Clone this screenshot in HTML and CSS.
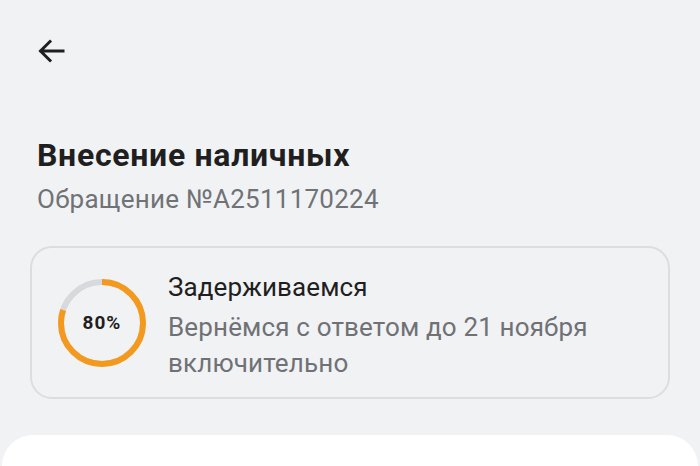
FILE: index.html
```html
<!DOCTYPE html>
<html lang="ru">
<head>
<meta charset="utf-8">
<link rel="stylesheet" href="styles.css">
</head>
<body>
<div class="page">
  <header class="topbar">
    <button class="back" aria-label="Назад">
      <svg width="32" height="32" viewBox="0 0 32 32"><path d="M28 16H6M15 6.5L5.5 16 15 25.5" fill="none" stroke="#1f1f21" stroke-width="3" stroke-linecap="square" stroke-linejoin="miter"/></svg>
    </button>
  </header>
  <section class="heading">
    <h1 class="title">Внесение наличных</h1>
    <p class="subtitle">Обращение №A2511170224</p>
  </section>
  <section class="status-card">
    <div class="progress">
      <svg width="88" height="88" viewBox="0 0 88 88">
        <circle cx="44" cy="44" r="41" fill="none" stroke="#d8d9dc" stroke-width="6"/>
        <circle cx="44" cy="44" r="41" fill="none" stroke="#f39a1e" stroke-width="6" stroke-dasharray="206.1 257.6" transform="rotate(-90 44 44)"/>
      </svg>
      <span class="progress-label">80%</span>
    </div>
    <div class="status-text">
      <div class="status-title">Задерживаемся</div>
      <div class="status-desc">Вернёмся с ответом до 21 ноября включительно</div>
    </div>
  </section>
  <section class="sheet"></section>
</div>
</body>
</html>
```
FILE: styles.css
```css
* { box-sizing: border-box; }
html, body { margin: 0; padding: 0; }
body {
  background: #f1f2f4;
  font-family: Roboto, "Noto Sans", sans-serif;
  width: 700px;
  height: 466px;
  overflow: hidden;
}
.page { display: flex; flex-direction: column; }
.topbar { height: 102px; padding: 35px 0 0 35px; }
.back {
  background: none; border: 0; padding: 0; width: 32px; height: 32px;
  display: block;
}
.back svg { display: block; }
.heading { padding: 0 0 0 37px; }
.title {
  margin: 34px 0 0 0;
  font-size: 32px; font-weight: 700; line-height: 38px;
  color: #1f1f21; letter-spacing: 0.7px;
}
.subtitle {
  margin: 9px 0 0 0;
  font-size: 26px; line-height: 32px; color: #707276;
  letter-spacing: 0.25px;
}
.status-card {
  margin: 31px 30px 0 30px;
  height: 153px;
  border: 2px solid #dcdde1;
  border-radius: 22px;
  display: flex; align-items: center;
  padding: 0 20px 0 26px;
  gap: 22px;
}
.progress { position: relative; width: 88px; height: 88px; flex: none; }
.progress svg { display: block; }
.progress-label {
  position: absolute; inset: 0;
  display: flex; align-items: center; justify-content: center;
  font-size: 19px; font-weight: 700; color: #1f1f21; letter-spacing: 1px;
}
.status-text { padding-top: 7px; }
.status-title { font-size: 26px; line-height: 32px; color: #1f1f21; letter-spacing: 0.1px; }
.status-desc { margin-top: 6px; font-size: 26px; line-height: 36px; color: #6f7175; letter-spacing: 0.15px; }
.sheet {
  margin: 36px 2px 0 2px;
  height: 31px;
  background: #ffffff;
  border-radius: 32px 32px 0 0;
}
```
